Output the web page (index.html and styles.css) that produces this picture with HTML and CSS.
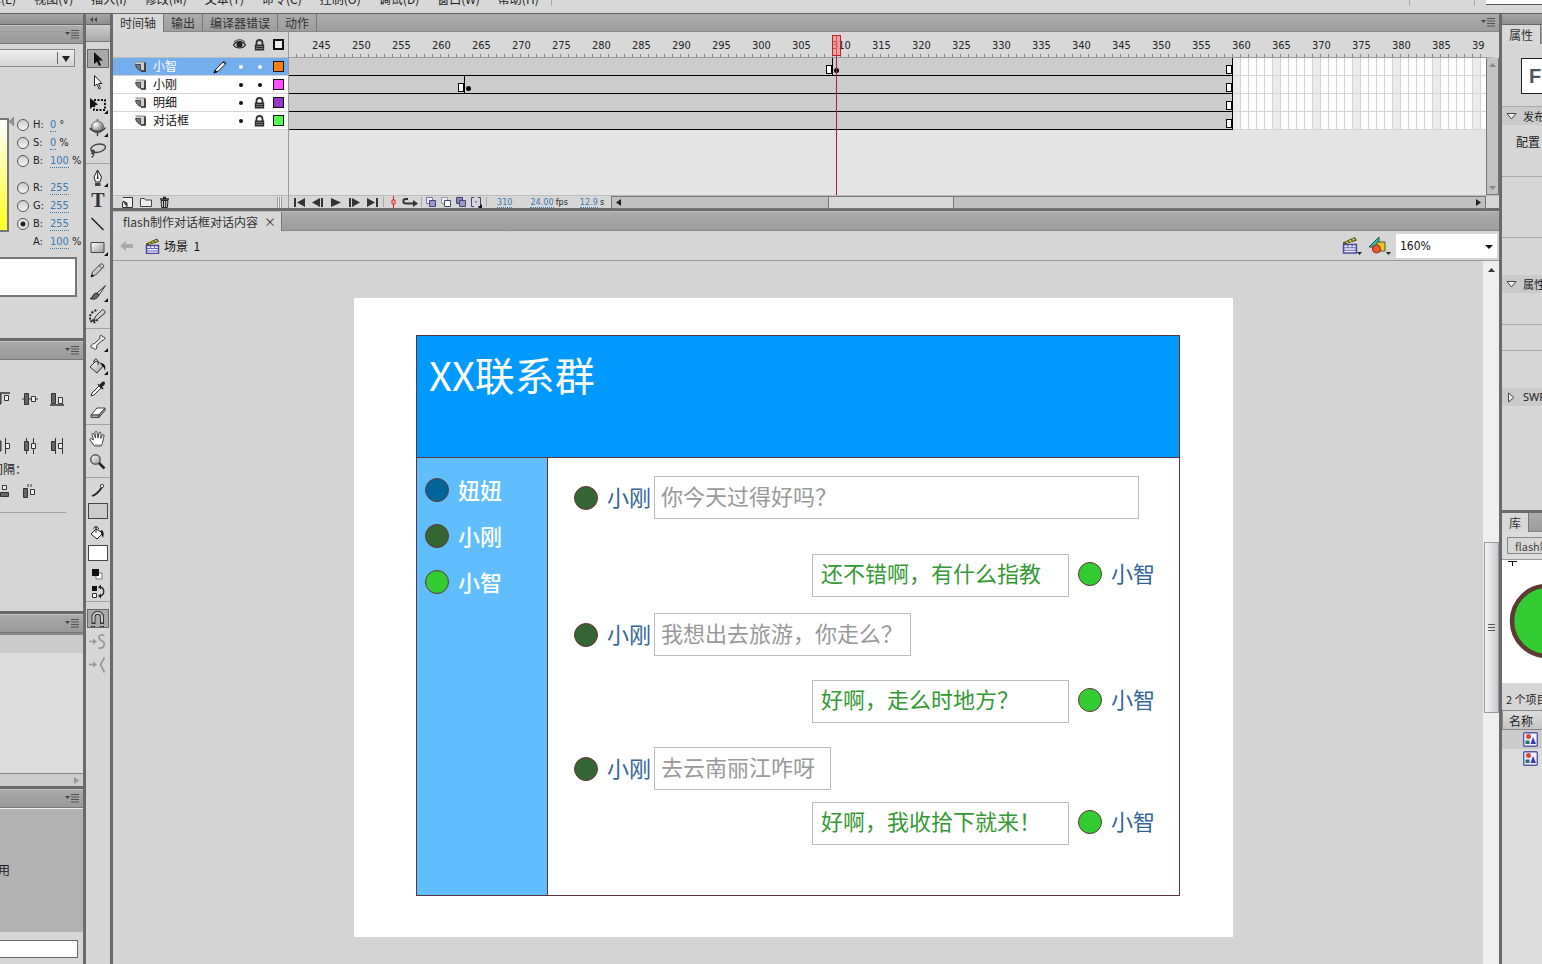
FILE: index.html
```html
<!DOCTYPE html>
<html lang="zh-CN">
<head>
<meta charset="utf-8">
<title>flash制作对话框对话内容</title>
<link rel="stylesheet" href="styles.css">
</head>
<body>
<svg class="defs" aria-hidden="true">
  <defs>
    <linearGradient id="metal" x1="0" y1="0" x2="1" y2="1"><stop offset="0" stop-color="#fff"/><stop offset="1" stop-color="#999"/></linearGradient>
    <radialGradient id="ball" cx=".35" cy=".3" r=".8"><stop offset="0" stop-color="#fff"/><stop offset="1" stop-color="#555"/></radialGradient>
    <symbol id="menu" viewBox="0 0 14 9"><path d="M0 2h5L2.500 5z" fill="#444"/><path d="M6 .5h8M6 3h8M6 5.500h8M6 8h8" stroke="#555"/></symbol>
    <symbol id="page" viewBox="0 0 11 11"><path d="M1 1h9v9H6V5H1z" fill="#d0d0d0"/><path d="M.5 1h9.500v9" fill="none" stroke="#888"/><path d="M10 1.500V10H6" fill="none" stroke="#222" stroke-width="1.500"/><path d="M.5 3.500h5V9.500C3 9 1 6.500.5 3.500z" fill="#777" stroke="#333" stroke-width=".8"/></symbol>
    <symbol id="lock" viewBox="0 0 11 12"><path d="M2.500 6V4a3 3 0 0 1 6 0v2" fill="none" stroke="#333" stroke-width="1.800"/><path d="M.8 5.500h9.400V11.500H.8z" fill="#2c2c2c"/><path d="M2 7.500h7M2 9.500h7" stroke="#888" stroke-width=".8"/></symbol>
    <symbol id="clap" viewBox="0 0 16 16"><path d="M1.500 7.500h12v8h-12z" fill="#eef" stroke="#4a4a9c" stroke-width="1.500"/><path d="M2 10.500h11M2 13h11M5.500 8v2M9.500 8v2" stroke="#6565b5"/><path d="M1 6L12 1l1.500 2.500L2 7z" fill="#8f8b18" stroke="#44430c" stroke-width=".9"/><path d="M4 5l1.500 1M7 3.500L8.500 5M10 2l1.500 1.500" stroke="#e6e36d"/></symbol>
    <symbol id="graphic" viewBox="0 0 15 15"><rect x=".7" y=".7" width="13.600" height="13.600" rx="1" fill="#eef" stroke="#5a5a9d" stroke-width="1.400"/><circle cx="5.500" cy="4.500" r="2.500" fill="#d24a35"/><path d="M2.500 8.500h4V12h-4z" fill="#28705f"/><path d="M10 5l3 7H7.500z" fill="#3b3bb0"/></symbol>
    <symbol id="corner" viewBox="0 0 4 4"><path d="M4 0v4H0z" fill="#111"/></symbol>
  </defs>
</svg>

<header class="menubar">
  <ul class="menus">
    <li>编辑(E)</li><li>视图(V)</li><li>插入(I)</li><li>修改(M)</li><li>文本(T)</li><li>命令(C)</li><li>控制(O)</li><li>调试(D)</li><li>窗口(W)</li><li>帮助(H)</li>
  </ul>
  <span class="menu-sep"></span>
  <span class="menu-fill"></span>
  <span class="menu-sep menu-sep-wide"></span>
  <span class="menu-sep"></span>
  <input class="search" type="text" aria-label="搜索">
</header>

<main class="workspace">
  <aside class="left-dock">
    <div class="strip"></div>
    <section class="panel panel-color">
      <div class="panel-head"><svg width="14" height="9"><use href="#menu"/></svg></div>
      <select class="fill-type" aria-label="填充类型"><option></option></select>
      <div class="mixer">
        <div class="ramp"></div>
        <svg class="ramp-arrow" width="5" height="9"><path d="M5 0v9L0 4.500z" fill="#999" stroke="#666" stroke-width=".6"/></svg>
        <div class="channels">
          <div class="channel"><label><input type="radio" name="ch">H:</label><button class="hot">0</button><span>°</span></div>
          <div class="channel"><label><input type="radio" name="ch">S:</label><button class="hot">0</button><span>%</span></div>
          <div class="channel"><label><input type="radio" name="ch">B:</label><button class="hot">100</button><span>%</span></div>
          <div class="channel channel-rgb"><label><input type="radio" name="ch">R:</label><button class="hot">255</button></div>
          <div class="channel"><label><input type="radio" name="ch">G:</label><button class="hot">255</button></div>
          <div class="channel"><label><input type="radio" name="ch" checked>B:</label><button class="hot">255</button></div>
          <div class="channel"><span class="alpha">A:</span><button class="hot">100</button><span>%</span></div>
        </div>
      </div>
      <div class="color-preview"></div>
    </section>
    <section class="panel panel-align">
      <div class="panel-head"><svg width="14" height="9"><use href="#menu"/></svg></div>
      <div class="align-row align-first">
        <svg width="14" height="14" viewBox="0 0 14 14"><path d="M0 1h14" stroke="#333" stroke-width="1.500"/><path d="M1 2h4v10H1z" fill="#666" stroke="#333"/><path d="M8.500 3.500h4v5h-4z" fill="#eee" stroke="#333"/></svg>
        <svg width="16" height="14" viewBox="0 0 16 14"><path d="M0 7h16" stroke="#333"/><path d="M2.500 1.500h4v11h-4z" fill="#666" stroke="#333"/><path d="M9.500 4.500h4v5h-4z" fill="#eee" stroke="#333"/></svg>
        <svg width="14" height="14" viewBox="0 0 14 14"><path d="M0 13h14" stroke="#333" stroke-width="1.500"/><path d="M1.500 1.500h4v10h-4z" fill="#666" stroke="#333"/><path d="M8.500 5.500h4v6h-4z" fill="#eee" stroke="#333"/></svg>
      </div>
      <div class="align-row align-second">
        <svg width="14" height="16" viewBox="0 0 14 16"><path d="M3.500 1v14M9.500 0v16" stroke="#333"/><path d="M1 3h4v10H1z" fill="#666" stroke="#333"/><path d="M9.500 5.500h4v5h-4z" fill="#eee" stroke="#333"/></svg>
        <svg width="14" height="16" viewBox="0 0 14 16"><path d="M3.500 0v16M10.500 0v16" stroke="#333"/><path d="M1.500 3.500h4v9h-4z" fill="#666" stroke="#333"/><path d="M8.500 5.500h4v5h-4z" fill="#eee" stroke="#333"/></svg>
        <svg width="14" height="16" viewBox="0 0 14 16"><path d="M5.500 0v16M12.500 0v16" stroke="#333"/><path d="M1.500 3.500h4v9h-4z" fill="#666" stroke="#333"/><path d="M8.500 5.500h4v5h-4z" fill="#eee" stroke="#333"/></svg>
      </div>
      <div class="spacing-label">间隔：</div>
      <div class="align-row align-third">
        <svg width="14" height="14" viewBox="0 0 14 14"><path d="M6.500 1.500h4v4h-4z" fill="#eee" stroke="#333"/><path d="M4.500 8.500h8v4h-8z" fill="#666" stroke="#333"/></svg>
        <svg width="14" height="14" viewBox="0 0 14 14"><path d="M1.500 4.500h4v9h-4z" fill="#666" stroke="#333"/><path d="M8.500 5.500h4v5h-4z" fill="#eee" stroke="#333"/><path d="M6 0v3M9 0v3" stroke="#333"/></svg>
      </div>
      <hr class="align-rule">
    </section>
    <section class="panel panel-list">
      <div class="panel-head"><svg width="14" height="9"><use href="#menu"/></svg></div>
      <div class="list-head"></div>
      <div class="list-body"></div>
      <div class="list-scroll"><svg width="5" height="7"><path d="M0 0v7l5-3.500z" fill="#999"/></svg></div>
    </section>
    <section class="panel panel-info">
      <div class="panel-head"><svg width="14" height="9"><use href="#menu"/></svg></div>
      <div class="info-body">用</div>
      <div class="info-foot"><input type="text" aria-label="名称"></div>
    </section>
  </aside>

  <nav class="toolbox" aria-label="工具">
    <div class="strip strip-tools"><svg width="8" height="5"><path d="M3 0v5L0 2.500zM7 0v5L4 2.500z" fill="#444"/></svg></div>
    <div class="gripper"></div>
    <div class="tool-group">
      <button class="tool is-on" aria-label="选择"><svg width="18" height="18" viewBox="0 0 18 18"><path d="M5 2v12l3-2.500 2 4.500 2-1-2-4.500h4z" fill="#111"/></svg></button>
      <button class="tool" aria-label="部分选取"><svg width="18" height="18" viewBox="0 0 18 18"><path d="M5.500 2.500v10.500l2.500-2 2 5 1.500-.7-2-4.800h3.500z" fill="#fff" stroke="#222"/></svg></button>
      <button class="tool" aria-label="任意变形"><svg width="18" height="18" viewBox="0 0 18 18"><path d="M5 4h11v10H5z" fill="none" stroke="#111" stroke-width="2" stroke-dasharray="2 1.500"/><path d="M1 2v11l3-2.500 5-2z" fill="#111"/></svg><svg class="more" width="4" height="4"><use href="#corner"/></svg></button>
      <button class="tool" aria-label="3D 旋转"><svg width="18" height="18" viewBox="0 0 18 18"><path d="M8.500 0v2M1 9.500h2" stroke="#555" stroke-width="1.200"/><circle cx="8.500" cy="8" r="6" fill="url(#ball)" stroke="#555" stroke-width=".8"/><path d="M1 9c1.500 4.500 13 4.500 15.500-.5M8.500 14v3" fill="none" stroke="#333" stroke-width="1.300"/></svg><svg class="more" width="4" height="4"><use href="#corner"/></svg></button>
      <button class="tool" aria-label="套索"><svg width="18" height="18" viewBox="0 0 18 18"><path d="M3 9.500C-.5 6 5 2 10.500 2 17 2 18 6 14 8.500 10 11 4 11 3 9.500c-.8-1.500 2-2 2.500 0 .4 2-2.500 2.500-3.500 1.500M4.500 11.500c.5 2-.5 3-2 4" fill="none" stroke="#444" stroke-width="1.400"/></svg></button>
    </div>
    <div class="tool-group">
      <button class="tool" aria-label="钢笔"><svg width="18" height="18" viewBox="0 0 18 18"><path d="M8.500 1L5 8l1.500 5h4.500L12.500 8z" fill="#fff" stroke="#222"/><path d="M8.700 1v8" stroke="#222"/><circle cx="8.700" cy="9" r="1" fill="#222"/><path d="M6 14h5.500v3H6z" fill="#444"/></svg><svg class="more" width="4" height="4"><use href="#corner"/></svg></button>
      <button class="tool tool-text" aria-label="文本">T</button>
      <button class="tool" aria-label="线条"><svg width="18" height="18" viewBox="0 0 18 18"><path d="M2.500 3l12 12" stroke="#111" stroke-width="1.300"/></svg></button>
      <button class="tool" aria-label="矩形"><svg width="18" height="18" viewBox="0 0 18 18"><path d="M2 4.500h13v10H2z" fill="url(#metal)" stroke="#444"/></svg><svg class="more" width="4" height="4"><use href="#corner"/></svg></button>
      <button class="tool" aria-label="铅笔"><svg width="18" height="18" viewBox="0 0 18 18"><path d="M2 16l1.500-5 8-8c1-1 4 1 3 3l-8 8z" fill="url(#metal)" stroke="#333"/><path d="M2 16l1-3 2 2z" fill="#111"/><path d="M10 4.500l3 3" stroke="#555"/></svg></button>
      <button class="tool" aria-label="刷子"><svg width="18" height="18" viewBox="0 0 18 18"><path d="M8 9l8.500-7.500L10 11z" fill="#ddd" stroke="#333"/><path d="M1 14.500c3 0 2.500-5 6-5.500l3 2c-1.500 4-5.500 5-9 3.500z" fill="#666" stroke="#222"/></svg><svg class="more" width="4" height="4"><use href="#corner"/></svg></button>
      <button class="tool" aria-label="Deco"><svg width="18" height="18" viewBox="0 0 18 18"><path d="M5 13c-2 1-5-1-4-4s4-6 8-6M1.500 13.500c2 3 5 2 7-.5" fill="none" stroke="#222" stroke-width="2" stroke-dasharray="2 1.500"/><path d="M5 14l1-4 7-7c1-1 4 1 3 3l-7 6z" fill="url(#metal)" stroke="#333"/></svg></button>
    </div>
    <div class="tool-group">
      <button class="tool" aria-label="骨骼"><svg width="18" height="18" viewBox="0 0 18 18"><path d="M5.500 9.500L11 4.500C10 1 13 0 13.500 3 17 2.500 16.500 6 13 6.500l-5.500 5c1.500 3-1.500 5.500-3 2.500-3.500.5-4-3.500 1-4.500z" fill="#f4f4f4" stroke="#333"/></svg><svg class="more" width="4" height="4"><use href="#corner"/></svg></button>
      <button class="tool" aria-label="颜料桶"><svg width="18" height="18" viewBox="0 0 18 18"><path d="M1 10l6-6 8 4-7 8z" fill="url(#metal)" stroke="#333"/><path d="M5 6c-.5-6 5-5 4 2" fill="none" stroke="#222"/><path d="M12 6c4 1 5 3 4 8-1-3-1-4-3-5z" fill="#111"/></svg><svg class="more" width="4" height="4"><use href="#corner"/></svg></button>
      <button class="tool" aria-label="滴管"><svg width="18" height="18" viewBox="0 0 18 18"><path d="M2 16l1-3 7-7 2 2-7 7z" fill="#fff" stroke="#333"/><path d="M8.500 4.500l5 5 1-1-1.500-2c5-2 3-7-.5-4l-2 2.200-1-1z" fill="#222"/></svg></button>
      <button class="tool" aria-label="橡皮擦"><svg width="18" height="18" viewBox="0 0 18 18"><path d="M2 12l6-7h8l-6 7z" fill="#fff" stroke="#444"/><path d="M2 12v2.500h8V12zM10 12l6-7v2.500l-6 7z" fill="#aaa" stroke="#444"/></svg></button>
    </div>
    <div class="tool-group tool-view">
      <button class="tool" aria-label="手形"><svg width="18" height="18" viewBox="0 0 18 18"><path d="M5.500 16L1 10c-.5-1.500 1-2 2-1l1.500 1L3 4.500c0-1.500 1.500-1.500 2 0L6.500 8 6 2.500c.3-1.500 2-1.500 2 0L9 8l1-5c.5-1.300 2-1 2 .3L11.700 8.500 13.500 5c.8-1 2-.3 1.500 1-1 3-1 7-3 10z" fill="#fff" stroke="#444"/><path d="M6 15h6" stroke="#888"/></svg></button>
      <button class="tool" aria-label="缩放"><svg width="18" height="18" viewBox="0 0 18 18"><circle cx="6.500" cy="6.500" r="4.700" fill="url(#metal)" stroke="#555" stroke-width="1.400"/><path d="M10 10l5.500 5.500" stroke="#222" stroke-width="2.500"/></svg></button>
    </div>
    <div class="tool-group tool-colors">
      <svg width="18" height="18" viewBox="0 0 18 18"><path d="M3 14c3-1 7-4 10-9" fill="none" stroke="#222" stroke-width="1.800"/><circle cx="13" cy="4" r="1.700" fill="#eee" stroke="#444"/></svg>
      <button class="swatch swatch-stroke" aria-label="笔触颜色"></button>
      <svg width="18" height="18" viewBox="0 0 18 18"><path d="M2 10l5-5 7 4-6 6z" fill="#fff" stroke="#222"/><path d="M7 2v7M4.500 4.500L7 2l3 3" stroke="#222" fill="none"/><path d="M12 6c3 1 3 4 2 8l-2-5z" fill="#111"/></svg>
      <button class="swatch swatch-fill" aria-label="填充颜色"></button>
      <svg class="swap" width="18" height="34" viewBox="0 0 18 34"><path d="M7 7h6v6H7z" fill="#fff" stroke="#777"/><path d="M3 3h7v7H3z" fill="#111"/><path d="M3 20h5v5H3z" fill="#111"/><path d="M3.500 27.500h4v4h-4z" fill="#fff" stroke="#333"/><path d="M11 21c5 1 5 8 0 9" fill="none" stroke="#222" stroke-width="1.300"/><path d="M9 21l3-2.500v5zM9 30l3-2.500v5z" fill="#222"/></svg>
    </div>
    <div class="tool-group tool-options">
      <button class="tool is-on" aria-label="贴紧至对象"><svg width="18" height="18" viewBox="0 0 18 18"><path d="M4.500 14V7a4.200 4.200 0 0 1 8.500 0v7" fill="none" stroke="#333" stroke-width="4"/><path d="M4.500 12.500V7a4.200 4.200 0 0 1 8.500 0v5.500" fill="none" stroke="#ccc" stroke-width="2"/><path d="M2 16.500h4M11 16.500h4" stroke="#111" stroke-dasharray="1.500 1"/></svg></button>
      <button class="tool" aria-label="平滑"><svg width="18" height="18" viewBox="0 0 18 18"><path d="M0 8.500h6" stroke="#999" stroke-width="1.500"/><path d="M4 5.500l4 3-4 3z" fill="#999"/><path d="M15.500 2.500c-5-2-7 2-4 4.500 3 2 5 3 3 6.500-1 2-3 2-5 1.500" fill="none" stroke="#999" stroke-width="1.800"/></svg></button>
      <button class="tool" aria-label="伸直"><svg width="18" height="18" viewBox="0 0 18 18"><path d="M0 8.500h6" stroke="#999" stroke-width="1.500"/><path d="M4 5.500l4 3-4 3z" fill="#999"/><path d="M15.500 1.500l-4 7 4 8" fill="none" stroke="#999" stroke-width="1.800"/></svg></button>
    </div>
  </nav>

  <div class="center">
    <section class="timeline">
      <div class="tabbar">
        <button class="tab is-active">时间轴</button><button class="tab">输出</button><button class="tab">编译器错误</button><button class="tab">动作</button>
        <svg class="tabbar-menu" width="14" height="9"><use href="#menu"/></svg>
      </div>
      <div class="timeline-body">
        <div class="layers">
          <div class="layer-head">
            <svg width="13" height="11" viewBox="0 0 13 11"><path d="M.5 6C3 1.500 10 1.500 12.500 6 10 10 3 10 .5 6z" fill="#ccc" stroke="#222" stroke-width="1.200"/><circle cx="6.500" cy="5.500" r="3" fill="#222"/><path d="M1 3c3-3 8-3 11 0" fill="none" stroke="#333"/></svg>
            <svg width="11" height="12"><use href="#lock"/></svg>
            <span class="outline-box"></span>
          </div>
          <div class="layer is-selected"><svg width="11" height="11"><use href="#page"/></svg><span class="layer-name">小智</span><svg class="layer-pencil" width="14" height="14" viewBox="0 0 14 14"><path d="M1 13l2-4 7-7c1-1 3.500.5 2.500 2l-7 7z" fill="#eee" stroke="#222"/><path d="M1 13l1-3 2 2zM10 2l2.500 2" fill="#111" stroke="#111"/></svg><i class="cell"><b class="bullet"></b></i><i class="cell"><b class="bullet"></b></i><i class="cell"><b class="chip chip-orange"></b></i></div>
          <div class="layer"><svg width="11" height="11"><use href="#page"/></svg><span class="layer-name">小刚</span><i class="cell"><b class="bullet"></b></i><i class="cell"><b class="bullet"></b></i><i class="cell"><b class="chip chip-pink"></b></i></div>
          <div class="layer"><svg width="11" height="11"><use href="#page"/></svg><span class="layer-name">明细</span><i class="cell"><b class="bullet"></b></i><i class="cell"><svg width="11" height="12"><use href="#lock"/></svg></i><i class="cell"><b class="chip chip-purple"></b></i></div>
          <div class="layer"><svg width="11" height="11"><use href="#page"/></svg><span class="layer-name">对话框</span><i class="cell"><b class="bullet"></b></i><i class="cell"><svg width="11" height="12"><use href="#lock"/></svg></i><i class="cell"><b class="chip chip-green"></b></i></div>
          <div class="layer-space"></div>
          <div class="layer-foot">
            <button aria-label="新建图层"><svg width="11" height="11" viewBox="0 0 11 11"><path d="M1 .5h9.500v10H.5V5" fill="#eee" stroke="#333"/><path d="M1 4l4 5.500V6z" fill="#555" stroke="#333"/></svg></button>
            <button aria-label="新建文件夹"><svg width="12" height="10" viewBox="0 0 12 10"><path d="M.5 1.500h4l1 1.500h6v6.500H.5z" fill="#eee" stroke="#444"/></svg></button>
            <button aria-label="删除"><svg width="11" height="12" viewBox="0 0 11 12"><path d="M1 3h9M4 1.500h3" stroke="#222" stroke-width="1.500"/><path d="M2 4.500h7l-.7 7H2.700z" fill="#ccc" stroke="#222"/><path d="M4.500 5v6M6.700 5v6" stroke="#222"/></svg></button>
            <span class="grip"></span>
          </div>
        </div>
        <div class="frames">
          <div class="ruler">
            <span>245</span><span>250</span><span>255</span><span>260</span><span>265</span><span>270</span><span>275</span><span>280</span><span>285</span><span>290</span><span>295</span><span>300</span><span>305</span><span>310</span><span>315</span><span>320</span><span>325</span><span>330</span><span>335</span><span>340</span><span>345</span><span>350</span><span>355</span><span>360</span><span>365</span><span>370</span><span>375</span><span>380</span><span>385</span><span>390</span>
          </div>
          <div class="tracks-row">
            <div class="tracks">
              <div class="track"><div class="span"></div><i class="span-end" style="--f:309"></i><i class="keyframe" style="--f:310"></i><i class="span-end" style="--f:359"></i></div>
              <div class="track"><div class="span"></div><i class="span-end" style="--f:263"></i><i class="keyframe" style="--f:264"></i><i class="span-end" style="--f:359"></i></div>
              <div class="track"><div class="span"></div><i class="span-end" style="--f:359"></i></div>
              <div class="track"><div class="span"></div><i class="span-end" style="--f:359"></i></div>
            </div>
            <div class="vscroll"><svg width="7" height="4"><path d="M0 4h7L3.500 0z" fill="#888"/></svg><svg width="7" height="4"><path d="M0 0h7L3.500 4z" fill="#888"/></svg></div>
          </div>
          <div class="playhead" style="--f:310"><span class="playhead-cap"></span></div>
          <div class="transport">
            <button aria-label="第一帧"><svg width="12" height="9"><path d="M0 0h2v9H0zM11 0v9L3 4.500z" fill="#333"/></svg></button>
            <button aria-label="后退一帧"><svg width="12" height="9"><path d="M8 0v9L0 4.500zM9 0h2v9H9z" fill="#333"/></svg></button>
            <button aria-label="播放"><svg width="12" height="9"><path d="M1 0v9l10-4.500z" fill="#333"/></svg></button>
            <button aria-label="前进一帧"><svg width="12" height="9"><path d="M1 0h2v9H1zM4 0v9l8-4.500z" fill="#333"/></svg></button>
            <button aria-label="最后一帧"><svg width="12" height="9"><path d="M1 0v9l8-4.500zM10 0h2v9h-2z" fill="#333"/></svg></button>
            <i class="vsep"></i>
            <button class="narrow" aria-label="帧居中"><svg width="5" height="12"><path d="M2.500 0v12" stroke="#d22"/><path d="M1 4h3v4H1z" fill="#fbb" stroke="#d22"/></svg></button>
            <button aria-label="循环"><svg width="16" height="10"><path d="M6 2H4C.5 2 .5 6.500 4 6.500h8" fill="none" stroke="#333" stroke-width="2"/><path d="M11 3v7l5-3.500z" fill="#333"/></svg></button>
            <i class="vsep"></i>
            <button class="onion" aria-label="绘图纸外观"><svg width="11" height="11"><path d="M.5.5h6v6h-6z" fill="#eef" stroke="#77a"/><path d="M3.500 3.500h6v6h-6z" fill="#99c" stroke="#447"/></svg></button>
            <button class="onion" aria-label="绘图纸外观轮廓"><svg width="11" height="11"><path d="M.5.5h6v6h-6z" fill="#eee" stroke="#99a"/><path d="M3.500 3.500h6v6h-6z" fill="#fff" stroke="#447"/></svg></button>
            <button class="onion" aria-label="编辑多个帧"><svg width="11" height="11"><path d="M.5.5h6v6h-6z" fill="#88b" stroke="#447"/><path d="M3.500 3.500h6v6h-6z" fill="#99c" stroke="#447"/></svg></button>
            <button class="onion" aria-label="修改标记"><svg width="11" height="11"><path d="M3 .5H.5v9H3M7 .5h2.500v9H7M5 4v2" fill="none" stroke="#447"/><path d="M11 7v4H7z" fill="#111"/></svg></button>
            <i class="vsep"></i>
            <button class="hot hot-small hot-frame">310</button>
            <span class="unit"><button class="hot hot-small">24.00</button>fps</span>
            <span class="unit"><button class="hot hot-small">12.9</button>s</span>
            <div class="hscroll"><svg width="5" height="7"><path d="M5 0v7L0 3.500z" fill="#222"/></svg><span class="hscroll-thumb"></span><svg width="5" height="7"><path d="M0 0v7l5-3.500z" fill="#222"/></svg></div>
          </div>
        </div>
      </div>
    </section>

    <section class="document">
      <div class="tabbar tabbar-doc"><button class="tab tab-doc is-active">flash制作对话框对话内容<span class="close">×</span></button></div>
      <div class="scenebar">
        <button class="back" aria-label="后退"><svg width="14" height="10"><path d="M0 5l6-5v3h7v4H6v3z" fill="#aaa"/></svg></button>
        <svg width="16" height="16"><use href="#clap"/></svg>
        <span class="scene-name">场景&nbsp; 1</span>
        <button class="scene-btn" aria-label="编辑场景"><svg width="22" height="20" viewBox="0 0 22 20"><use href="#clap" width="17" height="18" x="0" y="0"/><path d="M15 16h5l-2.500 3z" fill="#222"/></svg></button>
        <button class="scene-btn" aria-label="编辑元件"><svg width="24" height="20" viewBox="0 0 24 20"><path d="M1 11L11 1v10z" fill="#3dbb9a" stroke="#155" /><path d="M9 6h8v9H9z" fill="#e8c81e" stroke="#553"/><circle cx="8.500" cy="13" r="4" fill="#ef5b28" stroke="#823"/><path d="M18 16h5l-2.500 3z" fill="#222"/></svg></button>
        <span class="zoom-wrap"><select class="zoom" aria-label="缩放"><option>160%</option></select></span>
      </div>
      <div class="viewport">
        <div class="pasteboard">
          <article class="stage">
            <div class="chat">
              <h1 class="chat-title">XX联系群</h1>
              <ul class="members">
                <li><i class="dot dot-blue"></i><span>妞妞</span></li>
                <li><i class="dot dot-dark"></i><span>小刚</span></li>
                <li><i class="dot dot-green"></i><span>小智</span></li>
              </ul>
              <div class="messages">
                <div class="msg"><i class="dot dot-dark"></i><span class="who">小刚</span><p class="bubble bubble-long">你今天过得好吗？</p></div>
                <div class="msg msg-own gap-xl"><p class="bubble bubble-mid">还不错啊，有什么指教</p><i class="dot dot-green"></i><span class="who">小智</span></div>
                <div class="msg gap-m"><i class="dot dot-dark"></i><span class="who">小刚</span><p class="bubble bubble-mid">我想出去旅游，你走么？</p></div>
                <div class="msg msg-own gap-l"><p class="bubble bubble-mid">好啊，走么时地方？</p><i class="dot dot-green"></i><span class="who">小智</span></div>
                <div class="msg gap-l"><i class="dot dot-dark"></i><span class="who">小刚</span><p class="bubble bubble-short">去云南丽江咋呀</p></div>
                <div class="msg msg-own gap-s"><p class="bubble bubble-mid">好啊，我收拾下就来！</p><i class="dot dot-green"></i><span class="who">小智</span></div>
              </div>
            </div>
          </article>
        </div>
        <div class="stage-scroll">
          <svg width="7" height="4"><path d="M0 4h7L3.500 0z" fill="#333"/></svg>
          <div class="stage-thumb"><i></i></div>
        </div>
      </div>
    </section>
  </div>

  <aside class="right-dock">
    <div class="strip"></div>
    <section class="props">
      <div class="tabbar tabbar-side"><button class="tab is-active">属性</button></div>
      <div class="doc-badge"><span>Fl</span></div>
      <div class="section-head"><svg width="11" height="7"><path d="M1 .5h9L5.500 6z" fill="#eee" stroke="#444"/></svg>发布</div>
      <div class="profile">配置</div>
      <div class="prop-block"></div>
      <div class="prop-block prop-gap"></div>
      <div class="section-head"><svg width="11" height="7"><path d="M1 .5h9L5.500 6z" fill="#eee" stroke="#444"/></svg>属性</div>
      <div class="prop-line"></div>
      <div class="prop-line prop-short"></div>
      <div class="section-head section-swf"><svg width="11" height="11"><path d="M2.500 1v9L8 5.500z" fill="#eee" stroke="#444"/></svg>SWF</div>
    </section>
    <section class="library">
      <div class="tabbar tabbar-side"><button class="tab is-active">库</button></div>
      <select class="lib-doc" aria-label="库文档"><option>flash制作</option></select>
      <div class="lib-preview"><svg width="90" height="122" viewBox="0 0 90 122"><path d="M6 1.500h9M10.500 1v5" stroke="#111"/><circle cx="45" cy="61" r="35" fill="#33cc33" stroke="#5c3a33" stroke-width="4.500"/></svg></div>
      <div class="lib-count">2 个项目</div>
      <div class="lib-head">名称</div>
      <div class="lib-row is-on"><svg width="15" height="15"><use href="#graphic"/></svg></div>
      <div class="lib-row"><svg width="15" height="15"><use href="#graphic"/></svg></div>
    </section>
  </aside>
</main>
</body>
</html>
```
FILE: styles.css
```css
* { box-sizing: border-box; }

body {
  margin: 0;
  height: 100vh;
  display: flex;
  flex-direction: column;
  overflow: hidden;
  background: #d6d6d6;
  color: #222;
  font: 12px/16px "DejaVu Sans Condensed", "Noto Sans", "Noto Sans CJK SC", sans-serif;
}

ul, p, h1 { margin: 0; padding: 0; list-style: none; font-weight: normal; }
button, input, select { margin: 0; padding: 0; border: 0; background: none; color: inherit; font: inherit; border-radius: 0; }
select { appearance: none; }
i { font-style: normal; }
svg { display: block; flex: none; }
.defs { position: absolute; width: 0; height: 0; }

/* menu bar */
.menubar {
  flex: none;
  height: 13px;
  display: flex;
  align-items: flex-end;
  overflow: hidden;
  background: #d8d8d8;
  font-family: "Noto Sans CJK SC", sans-serif;
}
.menus { display: flex; gap: 18px; margin-left: -23px; padding-bottom: 6px; white-space: nowrap; }
.menu-sep { width: 1px; height: 13px; margin-left: 12px; background: linear-gradient(#aaa 6px, transparent 6px); }
.menu-sep-wide { margin-right: 52px; }
.menu-fill { flex: 1; }
.search { width: 56px; height: 13px; margin-left: 11px; background: linear-gradient(#fff 4px, #555 4px 5px, #d8d8d8 5px); }

.workspace { flex: 1; min-height: 0; display: flex; background: #6a6a6a; gap: 3px; }
.strip { flex: none; height: 12px; background: linear-gradient(#a6a6a6, #8e8e8e); border-top: 1px solid #666; border-bottom: 1px solid #666; }

/* left dock */
.left-dock { width: 83px; flex: none; display: flex; flex-direction: column; overflow: hidden; }
.panel { background: #d6d6d6; margin-bottom: 3px; flex: none; }
.panel-head {
  height: 19px;
  display: flex;
  align-items: center;
  justify-content: flex-end;
  padding-right: 4px;
  background: linear-gradient(#a9a9a9, #9a9a9a);
  border-top: 1px solid #c4c4c4;
  border-bottom: 1px solid #777;
}
.panel-color { position: relative; height: 313px; }
.panel-color::after {
  content: "";
  position: absolute;
  right: 13px;
  top: 31px;
  border: 4px solid transparent;
  border-top: 6px solid #222;
  border-bottom: 0;
  pointer-events: none;
}
.fill-type {
  display: block;
  width: 75px;
  height: 18px;
  margin-top: 5px;
  border: 1px solid #888;
  border-left: 0;
  background:
    linear-gradient(#666, #666) 57px 2px / 1px 12px no-repeat,
    linear-gradient(#eee, #d4d4d4);
}
.mixer { display: flex; align-items: flex-start; margin-top: 49px; }
.ramp { width: 9px; height: 114px; margin-top: 2px; border: 2px solid #777; border-left: 0; background: linear-gradient(#fff, #ffff33 90%); }
.ramp-arrow { margin-top: 1px; }
.channels { margin-left: 3px; font-size: 11px; }
.channel { height: 18px; display: flex; align-items: center; }
.channel-rgb { margin-top: 9px; }
.channel label { display: flex; align-items: center; width: 33px; gap: 4px; }
.channel span { margin-left: 3px; }
.channel .alpha { width: 17px; margin-left: 16px; }
.channel input { appearance: none; width: 12px; height: 12px; border: 1px solid #555; border-radius: 50%; background: linear-gradient(#ccc, #f4f4f4); }
.channel input:checked { background: radial-gradient(#222 2px, #e4e4e4 3px); }
.hot { color: #3a7ab5; border-bottom: 1px dotted #3a7ab5; line-height: 13px; }
.color-preview { width: 77px; height: 40px; margin-top: 6px; border: 2px solid #777; border-left: 0; background: #fff; }

.panel-align { height: 270px; }
.align-row { display: flex; gap: 12px; margin-left: -4px; }
.align-first { margin-top: 32px; }
.align-second { margin-top: 32px; gap: 13px; }
.align-third { margin-top: 6px; }
.spacing-label { margin: 8px 0 0 -9px; white-space: nowrap; }
.align-rule { width: 66px; height: 1px; margin: 14px 0 0; border: 0; background: #a0a0a0; }

.panel-list { height: 172px; display: flex; flex-direction: column; }
.list-head { height: 20px; background: #cbcbcb; border-top: 2px solid #888; }
.list-body { flex: 1; background: #dcdcdc; }
.list-scroll { height: 13px; display: flex; align-items: center; justify-content: flex-end; padding-right: 4px; background: #ccc; border-top: 1px solid #888; }
.panel-info { flex: 1; margin-bottom: 0; display: flex; flex-direction: column; }
.info-body { height: 124px; padding-top: 53px; background: #b2b2b2; border-top: 1px solid #eee; font-family: "Noto Sans CJK SC", sans-serif; text-indent: -2px; }
.info-foot { flex: 1; padding-top: 8px; background: #d6d6d6; }
.info-foot input { display: block; width: 78px; height: 18px; border: 1px solid #666; border-left: 0; background: #fff; }

/* toolbox */
.toolbox { width: 24px; flex: none; display: flex; flex-direction: column; background: #d6d6d6; }
.strip-tools { display: flex; align-items: center; padding-left: 4px; }
.gripper { height: 17px; background: linear-gradient(#ccc, #a9a9a9); border-bottom: 1px solid #777; margin-bottom: 3px; }
.tool-group { padding: 2px 0 1px; border-bottom: 1px solid #a0a0a0; display: flex; flex-direction: column; }
.tool { position: relative; height: 23px; width: 24px; display: flex; align-items: center; justify-content: center; }
.tool.is-on { box-shadow: inset 0 0 0 1px #666; background: #a9a9a9; height: 19px; width: 22px; margin: 2px 1px; }
.more { position: absolute; right: 2px; bottom: 2px; }
.tool-text { font: bold 20px/23px "Liberation Serif", serif; color: #333; }
.tool-view { padding-bottom: 4px; }
.tool-colors { align-items: center; padding-top: 4px; }
.swatch { width: 20px; height: 16px; margin: 3px 0 5px; border: 1px solid #444; }
.swatch-stroke { background: #ccc; }
.swatch-fill { background: #fff; }
.tool-options { border-bottom: 0; padding-top: 5px; }

/* center column */
.center { flex: 1; min-width: 0; display: flex; flex-direction: column; gap: 3px; }
.tabbar {
  flex: none;
  height: 19px;
  display: flex;
  background: linear-gradient(#acacac, #9d9d9d);
  border-top: 1px solid #666;
  border-bottom: 1px solid #888;
  font-family: "Noto Sans CJK SC", sans-serif;
}
.tab { padding: 0 7px; border-right: 1px solid #777; color: #333; line-height: 18px; white-space: nowrap; }
.tab.is-active { background: #d8d8d8; margin-bottom: -1px; }
.tabbar-menu { margin: 4px 4px 0 auto; }
.timeline { background: #d6d6d6; flex: none; }
.timeline-body { display: flex; }
.layers { width: 176px; flex: none; border-right: 1px solid #999; font-family: "Noto Sans CJK SC", sans-serif; }
.layer-head { height: 26px; display: flex; align-items: center; justify-content: flex-end; gap: 8px; padding-right: 4px; border-bottom: 1px solid #bbb; }
.outline-box { width: 11px; height: 11px; border: 2px solid #111; background: #eee; }
.layer { height: 18px; display: flex; align-items: center; padding-left: 22px; background: #fff; border-bottom: 1px solid #d4d4d4; color: #111; }
.layer.is-selected { background: #73aeee; color: #fff; }
.layer-name { flex: 1; padding: 0 0 2px 7px; }
.layer-pencil { margin-right: 4px; }
.cell { width: 19px; display: flex; justify-content: center; }
.bullet { width: 4px; height: 4px; border-radius: 50%; background: currentColor; }
.chip { width: 11px; height: 11px; border: 1px solid #111; }
.chip-orange { background: #ff8010; }
.chip-pink { background: #ff4cff; }
.chip-purple { background: #9933cc; }
.chip-green { background: #4cff4c; }
.layer-space { height: 65px; background: #e4e4e4; }
.layer-foot { height: 13px; display: flex; align-items: center; gap: 7px; padding-left: 9px; border-top: 1px solid #bbb; }
.grip { width: 5px; height: 11px; margin: 0 6px 0 auto; background: repeating-linear-gradient(90deg, #999 0 1px, #eee 1px 2px); }

.frames { flex: 1; min-width: 0; position: relative; background: #e4e4e4; }
.ruler {
  height: 26px;
  display: flex;
  padding-left: 23px;
  overflow: hidden;
  font-size: 11px;
  line-height: 28px;
  background:
    repeating-linear-gradient(90deg, transparent 0 7px, #888 7px 8px) 0 22px / 100% 3px no-repeat,
    #d8d8d8;
  border-bottom: 1px solid #999;
  border-right: 14px solid #d8d8d8;
}
.ruler span { flex: 0 0 40px; }
.tracks-row { display: flex; height: 137px; }
.tracks { flex: 1; min-width: 0; overflow: hidden; }
.track {
  position: relative;
  height: 18px;
  overflow: hidden;
  box-shadow: inset 0 -1px #d4d4d4;
  background:
    repeating-linear-gradient(90deg, transparent 0 7px, #d4d4d4 7px 8px),
    repeating-linear-gradient(90deg, #fff 0 23px, #ebebeb 23px 31px, #fff 31px 40px);
}
.span { width: 944px; height: 18px; background: #ccc; border-right: 1px solid #000; box-shadow: inset 0 -1px #000; }
.span-end, .keyframe { position: absolute; left: calc((var(--f) - 310) * 8px + 543px); }
.span-end { width: 6px; height: 9px; margin-left: 2px; bottom: 2px; border: 1px solid #000; background: #fff; }
.keyframe { width: 8px; height: 18px; top: 0; border-left: 1px solid #000; }
.keyframe::after { content: ""; position: absolute; left: 1px; bottom: 3px; width: 5px; height: 5px; border-radius: 50%; background: #000; }
.playhead { position: absolute; top: 3px; bottom: 13px; left: calc((var(--f) - 310) * 8px + 547px); width: 1px; background: #b02030; }
.playhead-cap { position: absolute; left: -4px; top: 0; width: 9px; height: 21px; border: 1px solid #b22; background: rgba(255, 120, 120, .6); }
.vscroll { width: 13px; display: flex; flex-direction: column; justify-content: space-between; align-items: center; padding: 5px 0 4px; background: #c2c2c2; border: 1px solid #777; border-top: 0; }

.transport { height: 13px; display: flex; align-items: center; padding-left: 2px; background: #d6d6d6; border-top: 1px solid #bbb; font-size: 9px; }
.transport button { flex: none; }
.transport button:not(.hot) { width: 18px; display: flex; justify-content: center; }
.transport .narrow:not(.hot) { width: 15px; }
.transport .onion:not(.hot) { width: 15px; }
.vsep { width: 1px; height: 10px; margin: 0 2px; background: #aaa; }
.hot-small { line-height: 10px; }
.hot-frame { margin-left: 8px; }
.unit { display: flex; align-items: center; gap: 2px; flex: none; margin-left: 18px; }
.unit + .unit { margin-left: 12px; }
.hscroll { flex: 1; height: 13px; display: flex; align-items: center; margin: 0 13px 0 7px; padding: 0 4px; background: #c0c0c0; border: 1px solid #777; }
.hscroll-thumb { width: 126px; height: 11px; margin: 0 auto 0 207px; background: #d8d8d8; border: 1px solid #777; border-width: 0 1px; }

.document { flex: 1; min-height: 0; display: flex; flex-direction: column; background: #d6d6d6; }
.tabbar-doc { height: 20px; border-top: 1px solid #bbb; }
.tab-doc { padding: 0 5px 0 10px; }
.close { margin-left: 6px; }
.scenebar { flex: none; height: 30px; display: flex; align-items: center; padding: 0 2px 0 7px; border-bottom: 1px solid #999; color: #111; font-family: "Noto Sans CJK SC", sans-serif; }
.back { margin-right: 11px; }
.scene-name { margin: 0 auto 0 3px; }
.scene-btn { margin-right: 4px; }
.zoom-wrap { position: relative; display: flex; }
.zoom-wrap::after { content: ""; position: absolute; right: 4px; top: 11px; border: 4px solid transparent; border-top-color: #111; border-bottom: 0; pointer-events: none; }
.zoom { width: 101px; height: 24px; padding-left: 4px; background: #fff; font-family: "DejaVu Sans Condensed", "Noto Sans", sans-serif; }

.viewport { flex: 1; min-height: 0; display: flex; }
.pasteboard { flex: 1; min-width: 0; display: flex; justify-content: center; align-items: flex-start; padding: 37px 9px 0 0; background: #d4d4d4; }
.stage-scroll { width: 16px; flex: none; display: flex; flex-direction: column; align-items: center; padding-top: 7px; background: #eee; }
.stage-thumb { width: 15px; height: 171px; margin-top: 270px; display: flex; align-items: center; justify-content: center; border: 1px solid #999; background: linear-gradient(90deg, #f6f6f6, #c8c8cc); }
.stage-thumb i { width: 7px; height: 8px; background: repeating-linear-gradient(#555 0 1px, transparent 1px 3px); }

/* stage artwork */
.stage { padding: 37px 53px 41px 62px; background: #fff; font-family: "Noto Sans CJK SC", sans-serif; }
.chat {
  width: 764px;
  display: grid;
  grid-template: 122px 437px / 131px 1fr;
  border: 1px solid #5a3340;
}
.chat-title { grid-column: 1 / 3; padding: 8px 12px; background: #0099ff; border-bottom: 1px solid #5a3340; color: #fff; font-size: 40px; line-height: 60px; }
.members { display: flex; flex-direction: column; gap: 22px; padding: 20px 8px; background: #60beff; border-right: 1px solid #5a3340; color: #fff; }
.members li { display: flex; align-items: center; gap: 9px; height: 24px; font-size: 22px; line-height: 24px; font-weight: 500; }
.members span { padding-bottom: 3px; }
.dot { width: 24px; height: 24px; flex: none; border: 1px solid #663333; border-radius: 50%; }
.dot-blue { background: #006699; }
.dot-dark { background: #336633; }
.dot-green { background: #33cc33; }
.messages { padding-top: 18px; font-size: 22px; line-height: 32px; }
.msg { display: flex; align-items: center; padding: 0 24px 0 26px; }
.msg-own { justify-content: flex-end; }
.gap-s { margin-top: 12px; }
.gap-m { margin-top: 16px; }
.gap-l { margin-top: 24px; }
.gap-xl { margin-top: 35px; }
.who { margin-left: 9px; padding-bottom: 4px; color: #336699; }
.msg-own .dot { margin-bottom: 4px; }
.msg-own .who { padding-bottom: 8px; }
.bubble { height: 43px; margin-left: 3px; padding: 2px 6px; border: 1px solid #bbb; color: #999; white-space: nowrap; }
.msg-own .bubble { margin: 0 9px 0 0; padding: 1px 8px; color: #339933; }
.bubble-long { width: 485px; }
.bubble-mid { width: 257px; }
.bubble-short { width: 177px; }

/* right dock */
.right-dock { width: 40px; flex: none; display: flex; flex-direction: column; overflow: hidden; white-space: nowrap; font-family: "Noto Sans CJK SC", sans-serif; }
.props { height: 485px; flex: none; margin-bottom: 3px; background: #d6d6d6; }
.tabbar-side { height: 19px; border-top: 0; }
.tabbar-side .tab { padding: 0 7px; }
.doc-badge { width: 60px; height: 36px; margin: 14px 0 13px 19px; padding: 5px 7px; background: #fff; border: 1px solid #222; color: #555; font: bold 20px/24px "Liberation Sans", sans-serif; }
.section-head { height: 18px; display: flex; align-items: center; gap: 6px; padding-left: 4px; background: #cacaca; font-size: 11px; }
.doc-badge + .section-head { box-shadow: 0 -1px #aaa; }
.profile { height: 52px; padding: 9px 0 0 14px; border-bottom: 1px solid #aaa; }
.prop-block { height: 61px; border-bottom: 1px solid #aaa; }
.prop-gap { height: 37px; border: 0; }
.prop-line { height: 32px; border-bottom: 1px solid #aaa; }
.prop-short { height: 26px; margin-bottom: 37px; }
.section-swf { font-family: "Noto Sans", sans-serif; }
.library { flex: 1; background: #dcdcdc; }
.lib-doc { display: block; width: 80px; height: 17px; margin: 5px; padding-left: 7px; border: 1px solid #888; background: #d8d8d8; color: #444; font-size: 11px; }
.lib-preview { height: 124px; border-top: 1px solid #999; background: #fff; }
.lib-count { height: 27px; padding: 8px 0 0 4px; background: #d6d6d6; font-size: 11px; }
.lib-head { height: 20px; padding-left: 6px; line-height: 19px; background: linear-gradient(#ddd, #c4c4c4); border: 1px solid #888; border-right: 0; }
.lib-row { height: 19px; padding: 2px 0 0 21px; }
.lib-row.is-on { background: #cbcbcb; }
```
